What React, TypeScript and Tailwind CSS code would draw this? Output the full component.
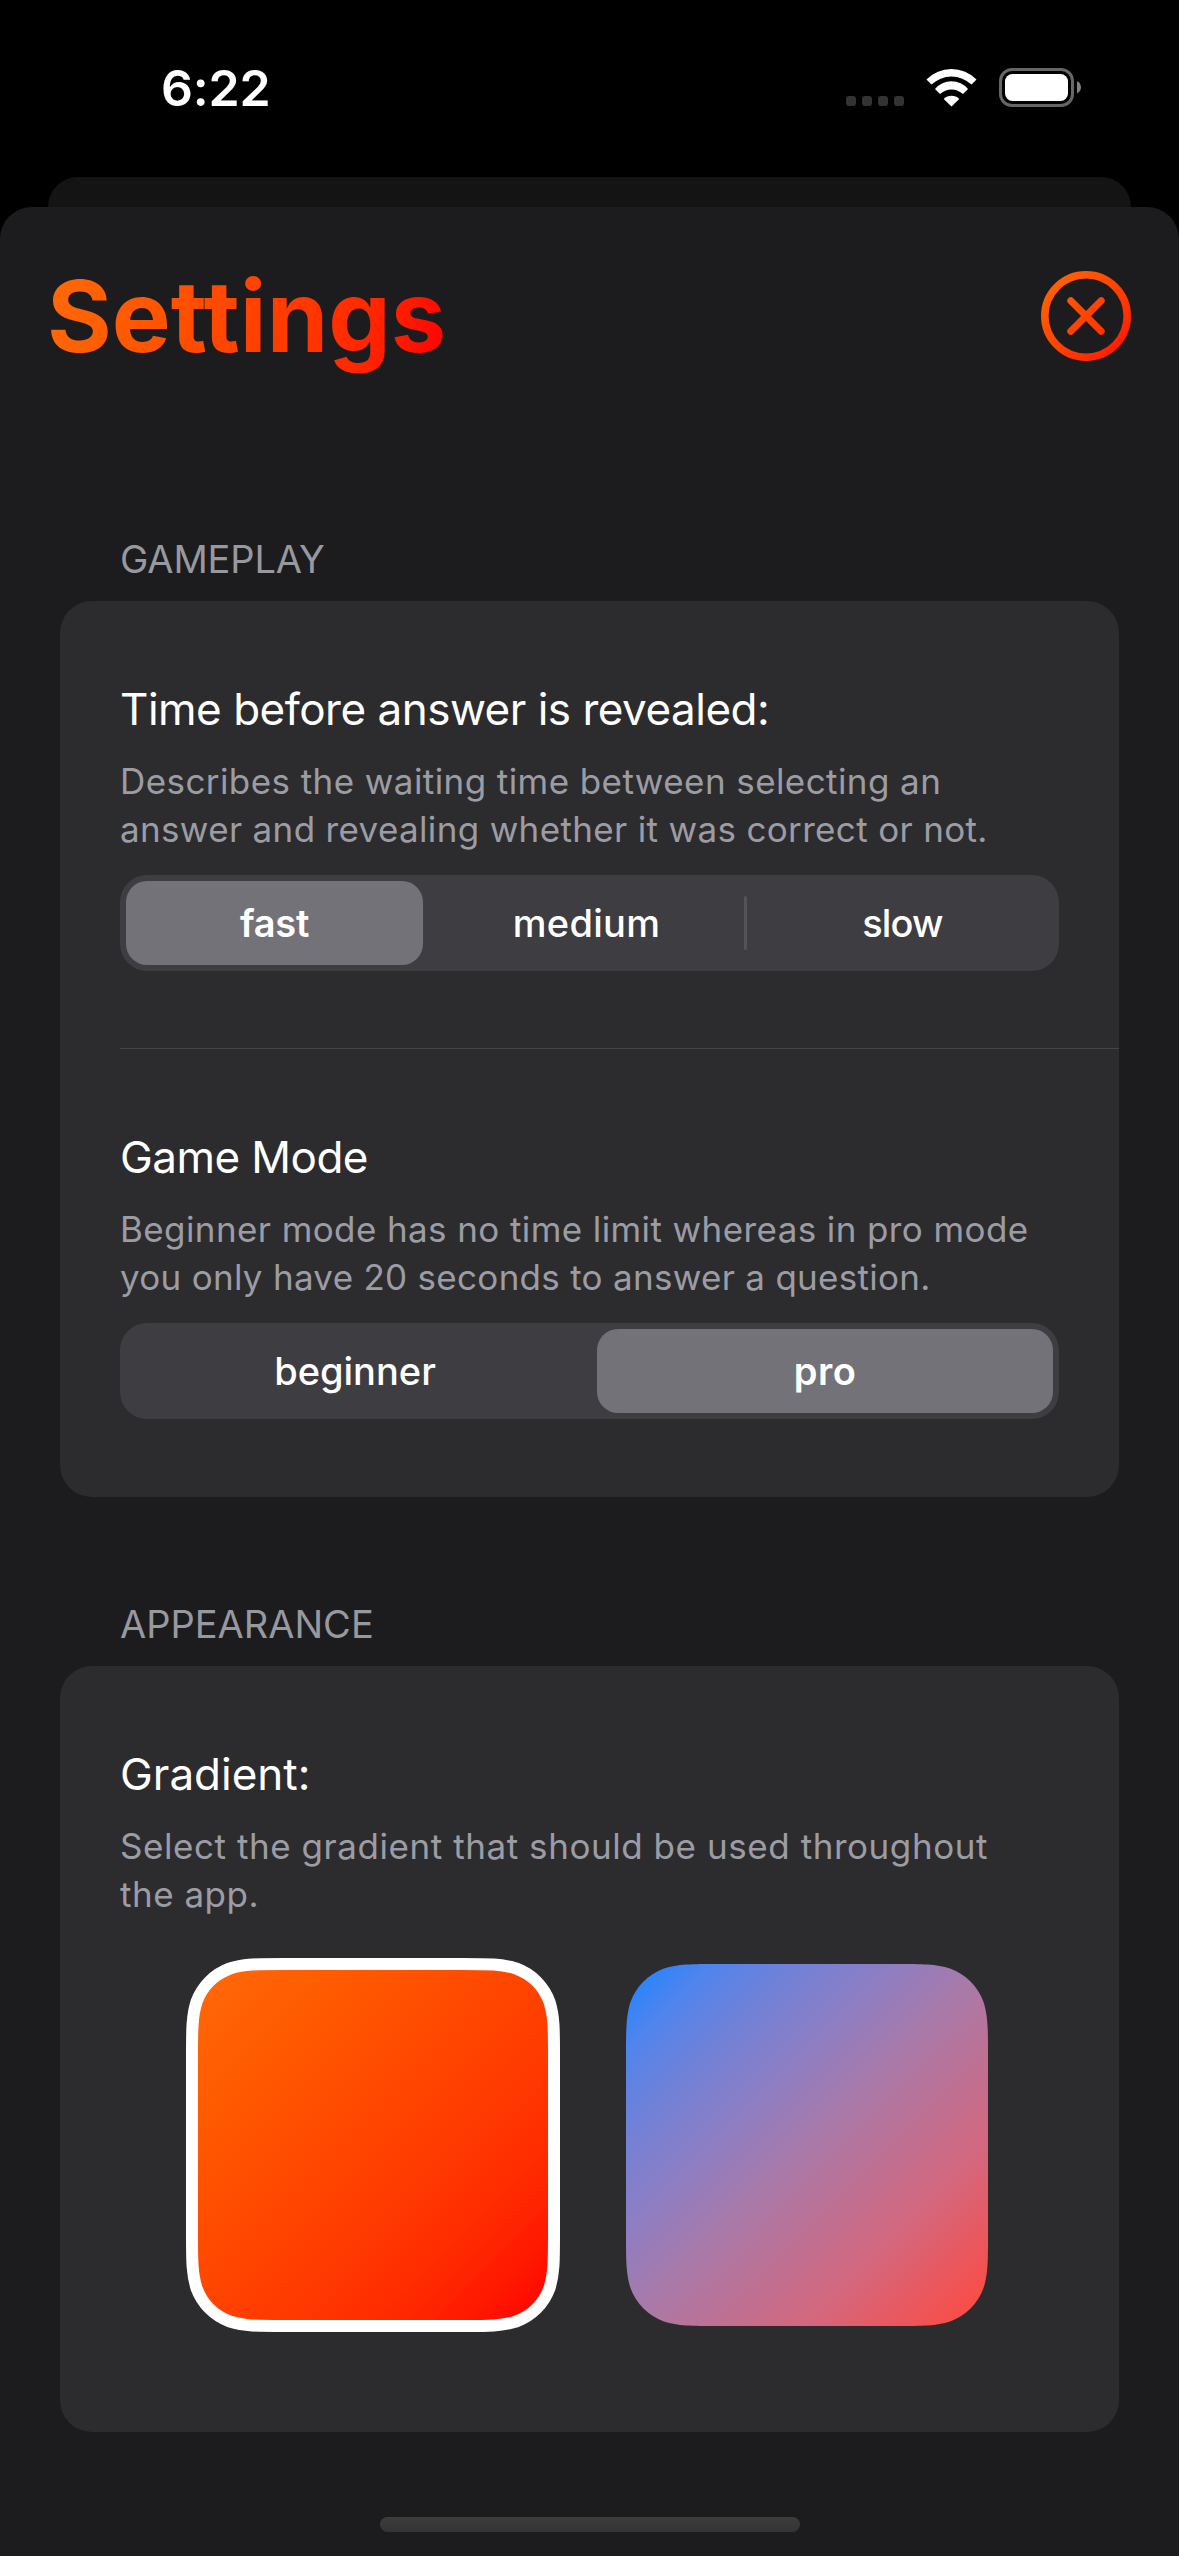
import { useId, type ReactNode } from "react";

type Stop = [offset: number, color: string];

const SUNSET: Stop[] = [
  [0, "#ff6b0b"],
  [0.25, "#ff5800"],
  [0.5, "#ff4300"],
  [0.65, "#ff3600"],
  [0.77, "#ff2900"],
  [0.87, "#ff1900"],
  [0.95, "#ff0800"],
  [1, "#ff0000"],
];

const DUSK: Stop[] = [
  [0, "#0a84ff"],
  [0.05, "#2f84fb"],
  [0.12, "#5084ed"],
  [0.18, "#6282e1"],
  [0.25, "#7481d5"],
  [0.36, "#8c7ec4"],
  [0.5, "#a97aa9"],
  [0.75, "#d4677d"],
  [0.95, "#f94d48"],
  [1, "#ff453a"],
];

/** Outline of a square with continuous (superelliptic) corners. */
function continuousSquare(s: number, r: number) {
  const a = 1.528665 * r;
  const b = 1.088493 * r;
  const c = 0.868407 * r;
  const d = 0.631494 * r;
  const e = 0.074911 * r;
  const f = 0.372824 * r;
  const g = 0.16906 * r;
  return [
    `M${a} 0H${s - a}`,
    `C${s - b} 0 ${s - c} 0 ${s - d} ${e}C${s - f} ${g} ${s - g} ${f} ${s - e} ${d}C${s} ${c} ${s} ${b} ${s} ${a}`,
    `V${s - a}`,
    `C${s} ${s - b} ${s} ${s - c} ${s - e} ${s - d}C${s - g} ${s - f} ${s - f} ${s - g} ${s - d} ${s - e}C${s - c} ${s} ${s - b} ${s} ${s - a} ${s}`,
    `H${a}`,
    `C${b} ${s} ${c} ${s} ${d} ${s - e}C${f} ${s - g} ${g} ${s - f} ${e} ${s - d}C0 ${s - c} 0 ${s - b} 0 ${s - a}`,
    `V${a}`,
    `C0 ${b} 0 ${c} ${e} ${d}C${g} ${f} ${f} ${g} ${d} ${e}C${c} 0 ${b} 0 ${a} 0Z`,
  ].join("");
}

function DiagonalGradient({ id, stops, size }: { id: string; stops: Stop[]; size: number }) {
  return (
    <linearGradient id={id} gradientUnits="userSpaceOnUse" x1="0" y1="0" x2={size} y2={size}>
      {stops.map(([offset, color]) => (
        <stop key={offset} offset={offset} stopColor={color} />
      ))}
    </linearGradient>
  );
}

function StatusBar() {
  return (
    <div className="flex h-[177px] items-start justify-between pr-[98px] pl-[161px]">
      <span className="mt-[58px] text-[50px] leading-[60px] font-semibold tracking-[-0.2px] text-white">6:22</span>
      <div className="mt-[68px] flex items-end">
        <div className="mb-px flex gap-[6px]">
          {[0, 1, 2, 3].map((n) => (
            <span key={n} className="size-[10px] rounded-[3px] bg-[#333333]" />
          ))}
        </div>
        <svg className="ml-[22px]" width="51" height="39" viewBox="0 0 51 39" fill="white">
          <path d="M.5 11.4A35 35 0 0 1 50.5 11.4L45.5 16.6A29 29 0 0 0 5.5 16.6Z" />
          <path d="M9 21A21.5 21.5 0 0 1 42 21L37 26.1A16.4 16.4 0 0 0 14 26.1Z" />
          <path d="M17.7 30.9A11 11 0 0 1 33.3 30.9L25.5 38.6Z" />
        </svg>
        <svg className="ml-[22px]" width="82" height="39" viewBox="0 0 82 39">
          <rect x="1.5" y="1.5" width="72" height="36" rx="11.5" fill="none" stroke="#666666" strokeWidth="3" />
          <rect x="6" y="6" width="63" height="27" rx="7.5" fill="white" />
          <path d="M78 13.2C80.6 14.3 82 16.6 82 19.3C82 22 80.6 24.3 78 25.4Z" fill="#808080" />
        </svg>
      </div>
    </div>
  );
}

function CloseButton() {
  const id = useId();
  return (
    <button type="button" aria-label="Close">
      <svg width="90" height="90" viewBox="0 0 90 90" fill="none">
        <defs>
          <DiagonalGradient id={id} stops={SUNSET} size={90} />
        </defs>
        <g stroke={`url(#${id})`} strokeLinecap="round">
          <circle cx="45" cy="45" r="41.2" strokeWidth="7.6" />
          <path d="M29.8 29.8L60.2 60.2M60.2 29.8L29.8 60.2" strokeWidth="7" />
        </g>
      </svg>
    </button>
  );
}

function Section({ title, children }: { title: ReactNode; children: ReactNode }) {
  return (
    <section>
      <h2 className="ml-[60px] text-[38px] leading-[48px] text-[#98989f]">{title}</h2>
      <div className="mt-[18px] rounded-[32px] bg-[#2c2c2e]">{children}</div>
    </section>
  );
}

function RowText({ title, children }: { title: ReactNode; children: ReactNode }) {
  return (
    <>
      <h3 className="text-[44px] leading-[54px] text-white">{title}</h3>
      <p className="mt-[21px] text-[35px] leading-[48px] whitespace-nowrap text-[#9c9ca4]">{children}</p>
    </>
  );
}

function Swatch({ stops, selected }: { stops: Stop[]; selected?: boolean }) {
  const id = useId();
  return (
    <svg className="overflow-visible" width="362" height="362" viewBox="0 0 362 362">
      <defs>
        <DiagonalGradient id={id} stops={stops} size={362} />
      </defs>
      <path
        d={continuousSquare(362, 60)}
        fill={`url(#${id})`}
        stroke={selected ? "white" : "none"}
        strokeWidth="12"
      />
    </svg>
  );
}

export default function App() {
  return (
    <div className="flex h-[2556px] w-[1179px] flex-col overflow-hidden bg-black font-['Inter',sans-serif]">
      <StatusBar />
      <div className="mx-[48px] h-[30px] shrink-0 rounded-t-[30px] bg-[#141414]" />
      <main className="flex flex-1 flex-col rounded-t-[32px] bg-[#1c1c1e] pt-[48px]">
        <header className="flex items-center justify-between pr-[48px] pl-[47px]">
          <h1 className="bg-[linear-gradient(107deg,#ff6b0b_0%,#ff5800_25%,#ff4300_50%,#ff3600_65%,#ff2900_77%,#ff1900_87%,#ff0800_95%,#ff0000_100%)] bg-clip-text text-[99px] leading-[122px] font-bold text-transparent">
            Settings
          </h1>
          <CloseButton />
        </header>

        <div className="mt-[158px] flex flex-col gap-[103px] px-[60px]">
          <Section title={<span className="tracking-[-0.15px]">GAMEPLAY</span>}>
            <div className="ml-[60px] border-b border-[#444447] pt-[81px] pb-[77px]">
              <RowText title={<span className="tracking-[-0.5px]">Time before answer is revealed:</span>}>
                <span className="tracking-[0.42px]">Describes the waiting time between selecting an</span>
                <br />
                <span className="tracking-[0.34px]">answer and revealing whether it was correct or not.</span>
              </RowText>
              <div className="mt-[22px] mr-[60px] flex h-[96px] items-center rounded-[27px] bg-[#3e3d42] pl-[6px] text-center text-[38px] leading-[84px] font-[450] text-white">
                <div className="w-[297px] rounded-[21px] bg-[#737278] font-semibold tracking-[-0.26px]">fast</div>
                <div className="ml-[6px] w-[315px] tracking-[0.3px]">medium</div>
                <div className="h-[54px] w-[3px] rounded-full bg-[#545358]" />
                <div className="w-[311px] tracking-[-0.8px]">slow</div>
              </div>
            </div>
            <div className="mx-[60px] pt-[81px] pb-[78px]">
              <RowText title={<span className="tracking-[-0.55px]">Game Mode</span>}>
                <span className="tracking-[0.4px]">Beginner mode has no time limit whereas in pro mode</span>
                <br />
                <span className="tracking-[0.29px]">you only have 20 seconds to answer a question.</span>
              </RowText>
              <div className="mt-[22px] flex h-[96px] items-center justify-between rounded-[27px] bg-[#3e3d42] px-[6px] text-center text-[38px] leading-[84px] font-[450] text-white">
                <div className="w-[458px]">beginner</div>
                <div className="w-[456px] rounded-[21px] bg-[#737278] font-semibold tracking-[0.5px]">pro</div>
              </div>
            </div>
          </Section>

          <Section title="APPEARANCE">
            <div className="px-[60px] pt-[81px] pb-[106px]">
              <RowText title="Gradient:">
                <span className="tracking-[0.56px]">Select the gradient that should be used throughout</span>
                <br />
                <span className="tracking-[0.5px]">the app.</span>
              </RowText>
              <div className="mt-[46px] flex gap-[72px] pl-[72px]">
                <Swatch stops={SUNSET} selected />
                <Swatch stops={DUSK} />
              </div>
            </div>
          </Section>
        </div>

        <div className="mx-auto mt-auto mb-[24px] h-[15px] w-[420px] rounded-full bg-linear-to-b from-[#3c3c3c] to-[#343434]" />
      </main>
    </div>
  );
}
